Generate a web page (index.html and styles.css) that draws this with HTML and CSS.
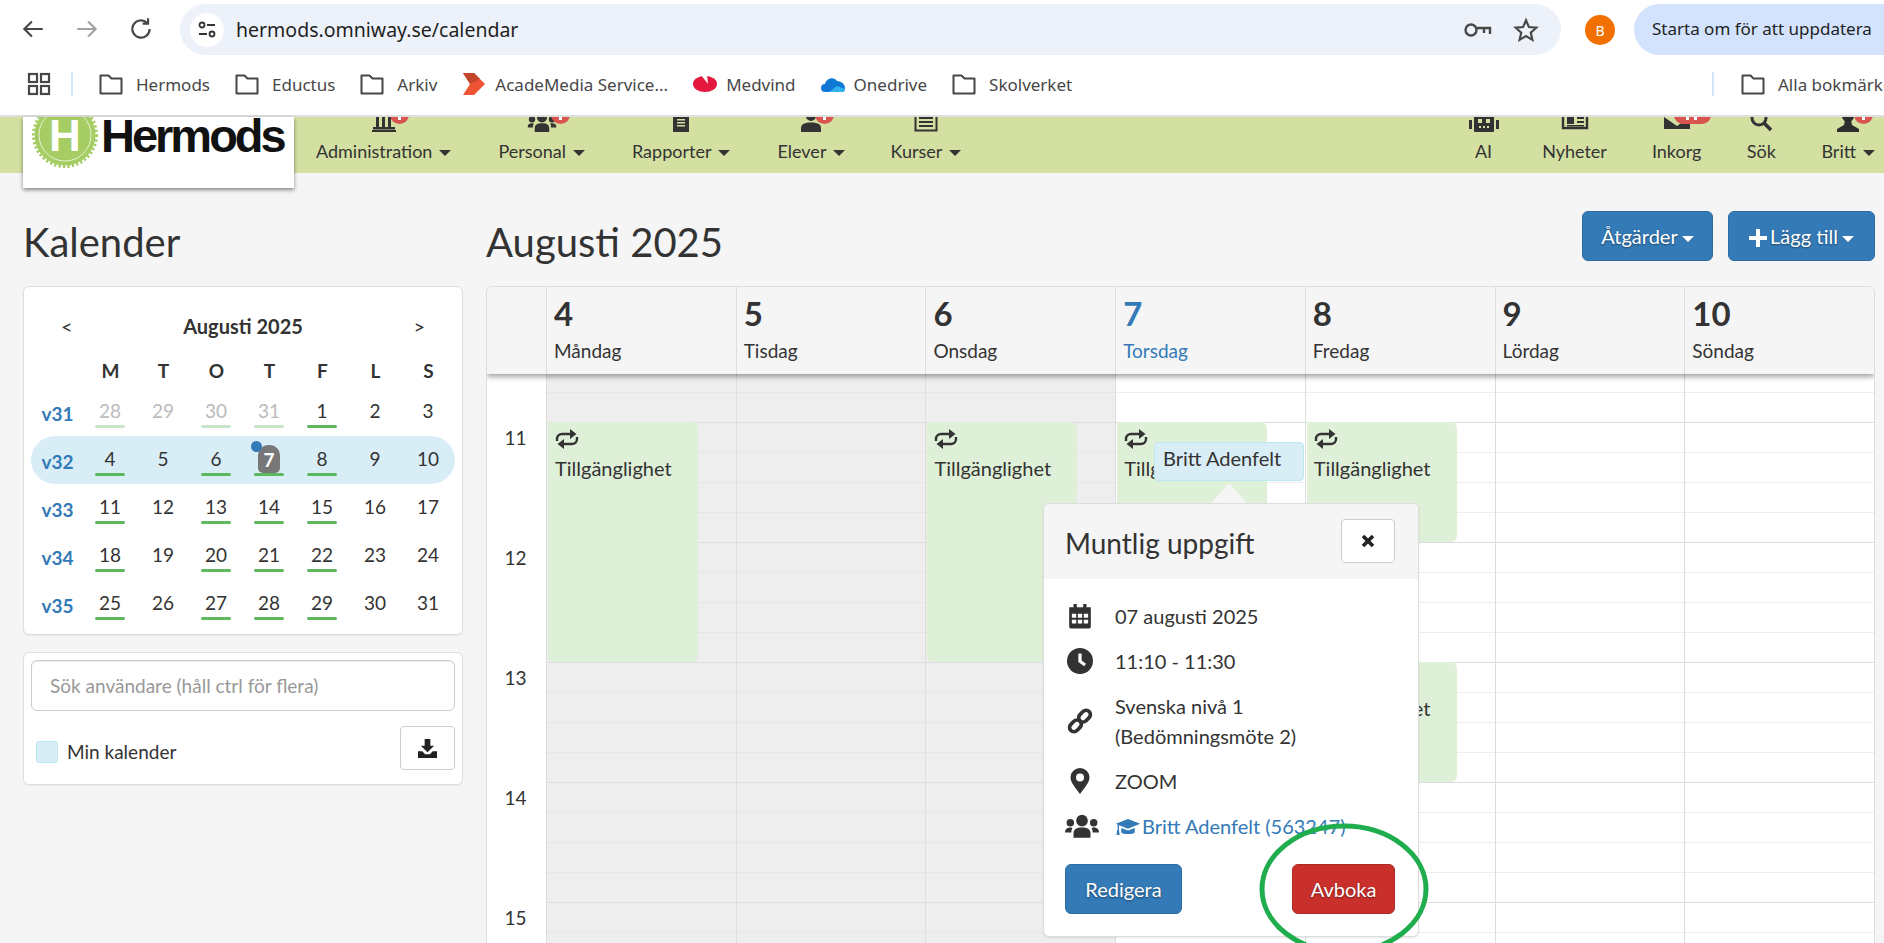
FILE: index.html
```html
<!DOCTYPE html>
<html lang="en">
<head>
    <meta charset="UTF-8">
    <meta name="viewport" content="width=device-width, initial-scale=1.0">
    <title>Kalender</title>
    <link rel="stylesheet" href="styles.css">
</head>
<body>
    <svg class="sprite" xmlns="http://www.w3.org/2000/svg">
        <symbol id="folder" viewBox="0 0 24 24"><path d="M1.500 3.500h8l3 3h10v15h-21z" fill="none" stroke="currentColor" stroke-width="2" stroke-linejoin="round"/></symbol>
        <symbol id="retweet" viewBox="0 0 24 20"><path d="M2 12v-2a5 5 0 0 1 5-5h9M22 8v2a5 5 0 0 1-5 5H8" fill="none" stroke="currentColor" stroke-width="2.400"/><path d="M15 0l6.500 5-6.500 5zM9 10l-6.500 5 6.500 5z" fill="currentColor"/></symbol>
        <symbol id="calendar" viewBox="0 0 24 24"><path d="M6 1h3v3H15V1h3v3h4v18a1.500 1.500 0 0 1-1.500 1.500h-17A1.500 1.500 0 0 1 2 22V4h4z" fill="currentColor"/><path d="M4.500 10h4v3.500h-4zM10 10h4v3.500h-4zM15.500 10h4v3.500h-4zM4.500 15.500h4V19h-4zM10 15.500h4V19h-4zM15.500 15.500h4V19h-4z" fill="#fff"/></symbol>
        <symbol id="clock" viewBox="0 0 24 24"><circle cx="12" cy="12" r="12" fill="currentColor"/><path d="M10.500 5h3v6.500l4 3-1.700 2.400-5.300-4z" fill="#fff"/></symbol>
        <symbol id="link" viewBox="0 0 24 24"><g fill="none" stroke="currentColor" stroke-width="3.400"><rect x="1.800" y="12.500" width="12" height="8" rx="4" transform="rotate(-45 7.800 16.500)"/><rect x="10.200" y="3.500" width="12" height="8" rx="4" transform="rotate(-45 16.200 7.500)"/></g></symbol>
        <symbol id="pin" viewBox="0 0 20 26"><path d="M10 0a9.500 9.500 0 0 1 9.500 9.500c0 5-5.500 11-9.500 16.500C6 20.500.5 14.500.5 9.500A9.500 9.500 0 0 1 10 0z" fill="currentColor"/><circle cx="10" cy="9.500" r="4" fill="#fff"/></symbol>
        <symbol id="users" viewBox="0 0 32 22"><g fill="currentColor"><circle cx="16" cy="6" r="5.500"/><circle cx="5" cy="8" r="3.500"/><circle cx="27" cy="8" r="3.500"/><path d="M8 22v-4c0-4 3-5.500 8-5.500s8 1.500 8 5.500v4zM0 17c0-3 2-4.500 5-4.500 1 0 1.500.2 2 .5-1 1.500-1 3-1 4H0zM32 17c0-3-2-4.500-5-4.500-1 0-1.500.2-2 .5 1 1.500 1 3 1 4h6z"/></g></symbol>
        <symbol id="cap" viewBox="0 0 28 20"><g fill="currentColor"><path d="M14 1L27.500 6.500 14 12 4 8v5L2.500 13V7.300L.5 6.500z"/><path d="M6.500 11v5c2 2.500 13 2.500 15 0v-5L14 14z"/><path d="M2 13h2l.7 6H1.300z"/></g></symbol>
        <symbol id="download" viewBox="0 0 20 20"><path d="M7 0h6v7h4l-7 7-7-7h4zM0 13h4.500l3 3h5l3-3H20v7H0z" fill="currentColor"/></symbol>
        <symbol id="times" viewBox="0 0 14 14"><path d="M2 2l10 10M12 2L2 12" stroke="currentColor" stroke-width="3.600"/></symbol>
    </svg>

    <div class="browser">
        <div class="toolbar">
            <svg class="tool-icon" viewBox="0 0 24 24"><path d="M21 12H4M11 5l-7 7 7 7" fill="none" stroke="#474747" stroke-width="2"/></svg>
            <svg class="tool-icon" viewBox="0 0 24 24"><path d="M3 12h17M13 5l7 7-7 7" fill="none" stroke="#a3a3a3" stroke-width="2"/></svg>
            <svg class="tool-icon" viewBox="0 0 24 24"><path d="M20 12a8 8 0 1 1-2.500-5.800M18.500 2v5h-5" fill="none" stroke="#474747" stroke-width="2"/></svg>
            <div class="addressbar">
                <span class="tune">
                    <svg viewBox="0 0 20 20" width="20" height="20"><g fill="none" stroke="#333" stroke-width="1.800"><circle cx="5" cy="5" r="2.500"/><path d="M10 5h8M2 14h8"/><circle cx="15" cy="14" r="2.500"/></g></svg>
                </span>
                <span class="url">hermods.omniway.se/calendar</span>
                <svg class="addr-icon" viewBox="0 0 30 24"><g fill="none" stroke="#474747" stroke-width="2.400"><circle cx="8" cy="12" r="5.500"/><path d="M13.500 10H27v6M21 10v5"/></g></svg>
                <svg class="addr-icon" viewBox="0 0 24 24"><path d="M12 3l2.700 6.300 6.800.6-5.100 4.500 1.500 6.700-5.900-3.500-5.900 3.500 1.500-6.700L2.500 9.900l6.800-.6z" fill="none" stroke="#474747" stroke-width="2"/></svg>
            </div>
            <span class="avatar">B</span>
            <span class="update">Starta om för att uppdatera</span>
        </div>
        <div class="bookmarks">
            <svg class="apps" viewBox="0 0 24 24"><g fill="none" stroke="#474747" stroke-width="2.200"><rect x="2" y="2" width="8" height="8"/><rect x="14" y="2" width="8" height="8"/><rect x="2" y="14" width="8" height="8"/><rect x="14" y="14" width="8" height="8"/></g></svg>
            <span class="bm-sep"></span>
            <span class="bm"><svg class="bm-icon"><use href="#folder"/></svg>Hermods</span>
            <span class="bm"><svg class="bm-icon"><use href="#folder"/></svg>Eductus</span>
            <span class="bm"><svg class="bm-icon"><use href="#folder"/></svg>Arkiv</span>
            <span class="bm bm-color"><svg class="bm-icon" viewBox="0 0 24 24"><path d="M1 1h11l11 11-11 11H1l7-11z" fill="#ee5434"/><path d="M1 1h11l6 6-10 5z" fill="#c4472d"/></svg>AcadeMedia Service...</span>
            <span class="bm bm-color"><svg class="bm-icon" viewBox="0 0 24 24"><ellipse cx="12" cy="12" rx="12" ry="8" fill="#e4173f"/><path d="M8 3l7 9-1-9z" fill="#fff"/></svg>Medvind</span>
            <span class="bm bm-color"><svg class="bm-icon" viewBox="0 0 24 24"><path d="M4 20a4 4 0 0 1 0-8c1-6 9-8 12-3 4 0 8 3 8 7 0 2-1 4-3 4z" fill="#0f78d4"/><path d="M8 20l8-6 8 3c0 2-1 3-3 3z" fill="#33b2ee"/></svg>Onedrive</span>
            <span class="bm"><svg class="bm-icon"><use href="#folder"/></svg>Skolverket</span>
            <span class="bm-sep bm-sep-right"></span>
            <span class="bm bm-all"><svg class="bm-icon"><use href="#folder"/></svg>Alla bokmärken</span>
        </div>
    </div>

    <div class="topnav">
        <div class="logo">
            <svg class="seal" viewBox="0 0 66 66">
                <circle cx="33" cy="33" r="30.500" fill="#a5cd64"/>
                <circle cx="33" cy="33" r="31" fill="none" stroke="#a5cd64" stroke-width="4" stroke-dasharray="2.200 2.200"/>
                <circle cx="33" cy="33" r="26" fill="none" stroke="#e6f1d2" stroke-width="1"/>
                <text x="33" y="49" text-anchor="middle" class="seal-h">H</text>
            </svg>
            <span class="logo-text">Hermods</span>
        </div>
        <div class="nav-left">
            <div class="nav-item nav-admin">
                <span class="nav-icon"><svg width="26" height="20" viewBox="0 0 26 20"><path d="M5 0h3v15H5zM11 0h3v15h-3zM17 0h3v15h-3zM2 15h22v2.500H2zM1 18h24v2H1z" fill="#333"/></svg><i class="badge"></i></span>
                <span class="nav-label">Administration<i class="caret"></i></span>
            </div>
            <div class="nav-item nav-personal">
                <span class="nav-icon"><svg width="32" height="20" viewBox="0 0 32 22"><use href="#users"/></svg><i class="badge"></i></span>
                <span class="nav-label">Personal<i class="caret"></i></span>
            </div>
            <div class="nav-item nav-rapporter">
                <span class="nav-icon"><svg width="18" height="20" viewBox="0 0 18 20"><path d="M1 0h16v20H1z" fill="#333"/><path d="M5 7h8v1.500H5zM5 10h8v1.500H5zM5 13h8v1.500H5z" fill="#d3e0a2"/></svg></span>
                <span class="nav-label">Rapporter<i class="caret"></i></span>
            </div>
            <div class="nav-item nav-elever">
                <span class="nav-icon"><svg width="22" height="20" viewBox="0 0 22 20"><circle cx="11" cy="4" r="5" fill="#333"/><path d="M1 20v-4c0-4 4-5.500 10-5.500s10 1.500 10 5.500v4z" fill="#333"/></svg><i class="badge"></i></span>
                <span class="nav-label">Elever<i class="caret"></i></span>
            </div>
            <div class="nav-item nav-kurser">
                <span class="nav-icon"><svg width="24" height="20" viewBox="0 0 24 20"><path d="M1.500 1h21v17.500h-21z" fill="none" stroke="#333" stroke-width="2"/><path d="M5 5h14v2H5zM5 9h14v2H5zM5 13h14v2H5z" fill="#333"/></svg></span>
                <span class="nav-label">Kurser<i class="caret"></i></span>
            </div>
        </div>
        <div class="nav-right">
            <div class="nav-item nav-ai">
                <span class="nav-icon"><svg width="30" height="20" viewBox="0 0 30 20"><path d="M7 0h16a2 2 0 0 1 2 2v17a1 1 0 0 1-1 1H6a1 1 0 0 1-1-1V2a2 2 0 0 1 2-2zM0 8h3v9H0zM27 8h3v9h-3z" fill="#333"/><path d="M9 7h4v4H9zM17 7h4v4h-4zM10 14h2v2h-2zM14 14h2v2h-2zM18 14h2v2h-2z" fill="#d3e0a2"/></svg></span>
                <span class="nav-label">AI</span>
            </div>
            <div class="nav-item nav-nyheter">
                <span class="nav-icon"><svg width="28" height="20" viewBox="0 0 28 20"><path d="M2 -2h24v18H2z" fill="none" stroke="#333" stroke-width="2.400"/><path d="M6 5h7v7H6zM16 5h7v2h-7zM16 9h7v2h-7zM6 13h17v1.500H6z" fill="#333"/></svg></span>
                <span class="nav-label">Nyheter</span>
            </div>
            <div class="nav-item nav-inkorg">
                <span class="nav-icon"><svg width="28" height="20" viewBox="0 0 28 20"><path d="M1 5l13 9L27 5v12H1z" fill="#333"/><path d="M1 1h8L1 5z" fill="#333"/></svg><i class="badge badge-wide"></i></span>
                <span class="nav-label">Inkorg</span>
            </div>
            <div class="nav-item nav-sok">
                <span class="nav-icon"><svg width="24" height="20" viewBox="0 0 24 20"><circle cx="10" cy="6" r="7" fill="none" stroke="#333" stroke-width="3"/><path d="M15 11l7 7" stroke="#333" stroke-width="3.500"/></svg></span>
                <span class="nav-label">Sök</span>
            </div>
            <div class="nav-item nav-britt">
                <span class="nav-icon"><svg width="26" height="20" viewBox="0 0 26 20"><circle cx="13" cy="4" r="6" fill="#2d2d2d"/><path d="M10 8h6l1 5 7 4v3H2v-3l7-4z" fill="#2d2d2d"/></svg><i class="badge"></i></span>
                <span class="nav-label">Britt<i class="caret"></i></span>
            </div>
        </div>
    </div>

    <div class="content">
        <div class="side">
            <h1 class="page-title">Kalender</h1>
            <div class="panel minical">
                <div class="mc-head">
                    <span class="mc-arrow">&lt;</span>
                    <strong>Augusti 2025</strong>
                    <span class="mc-arrow">&gt;</span>
                </div>
                <div class="mc-row mc-days">
                    <span></span><b>M</b><b>T</b><b>O</b><b>T</b><b>F</b><b>L</b><b>S</b>
                </div>
                <div class="mc-row">
                    <span class="wk">v31</span>
                    <span class="d off mark">28</span><span class="d off">29</span><span class="d off mark">30</span><span class="d off mark">31</span><span class="d has">1</span><span class="d">2</span><span class="d">3</span>
                </div>
                <div class="mc-row current">
                    <span class="wk">v32</span>
                    <span class="d has">4</span><span class="d">5</span><span class="d has">6</span><span class="d has today"><i class="dot"></i><em>7</em></span><span class="d has">8</span><span class="d">9</span><span class="d">10</span>
                </div>
                <div class="mc-row">
                    <span class="wk">v33</span>
                    <span class="d has">11</span><span class="d">12</span><span class="d has">13</span><span class="d has">14</span><span class="d has">15</span><span class="d">16</span><span class="d">17</span>
                </div>
                <div class="mc-row">
                    <span class="wk">v34</span>
                    <span class="d has">18</span><span class="d">19</span><span class="d has">20</span><span class="d has">21</span><span class="d has">22</span><span class="d">23</span><span class="d">24</span>
                </div>
                <div class="mc-row">
                    <span class="wk">v35</span>
                    <span class="d has">25</span><span class="d">26</span><span class="d has">27</span><span class="d has">28</span><span class="d has">29</span><span class="d">30</span><span class="d">31</span>
                </div>
            </div>
            <div class="panel userbox">
                <input class="usersearch" type="text" placeholder="Sök användare (håll ctrl för flera)">
                <div class="userbox-row">
                    <span class="check"></span>
                    <span class="check-label">Min kalender</span>
                    <button class="btn-plain"><svg width="19" height="19"><use href="#download"/></svg></button>
                </div>
            </div>
        </div>

        <div class="main">
            <div class="main-head">
                <h1 class="page-title">Augusti 2025</h1>
                <div class="actions">
                    <button class="btn btn-blue btn-do">Åtgärder<i class="caret"></i></button>
                    <button class="btn btn-blue btn-add"><span class="plus"></span>Lägg till<i class="caret"></i></button>
                </div>
            </div>

            <div class="week">
                <div class="week-head">
                    <div class="corner"></div>
                    <div class="dayhead"><b>4</b><span>Måndag</span></div>
                    <div class="dayhead"><b>5</b><span>Tisdag</span></div>
                    <div class="dayhead"><b>6</b><span>Onsdag</span></div>
                    <div class="dayhead today-head"><b>7</b><span>Torsdag</span></div>
                    <div class="dayhead"><b>8</b><span>Fredag</span></div>
                    <div class="dayhead"><b>9</b><span>Lördag</span></div>
                    <div class="dayhead"><b>10</b><span>Söndag</span></div>
                </div>
                <div class="week-body">
                    <div class="hours">
                        <div class="hour">11</div>
                        <div class="hour">12</div>
                        <div class="hour">13</div>
                        <div class="hour">14</div>
                        <div class="hour">15</div>
                    </div>
                    <div class="daycol closed">
                        <div class="event ev-long"><svg class="rt"><use href="#retweet"/></svg>Tillgänglighet</div>
                    </div>
                    <div class="daycol closed"></div>
                    <div class="daycol closed">
                        <div class="event ev-long"><svg class="rt"><use href="#retweet"/></svg>Tillgänglighet</div>
                    </div>
                    <div class="daycol">
                        <div class="event ev-short"><svg class="rt"><use href="#retweet"/></svg>Tillgänglighet</div>
                    </div>
                    <div class="daycol">
                        <div class="event ev-short"><svg class="rt"><use href="#retweet"/></svg>Tillgänglighet</div>
                        <div class="event ev-short ev-later"><svg class="rt"><use href="#retweet"/></svg>Tillgänglighet</div>
                    </div>
                    <div class="daycol"></div>
                    <div class="daycol"></div>
                </div>
            </div>
        </div>
    </div>

    <div class="tip">Britt Adenfelt</div>
    <div class="pop-arrow"></div>
    <div class="popover">
        <div class="pop-head">
            <span class="pop-title">Muntlig uppgift</span>
            <button class="btn-plain btn-close"><svg width="14" height="14"><use href="#times"/></svg></button>
        </div>
        <div class="pop-body">
            <div class="pop-row"><svg class="pop-icon"><use href="#calendar"/></svg><span>07 augusti 2025</span></div>
            <div class="pop-row"><svg class="pop-icon"><use href="#clock"/></svg><span>11:10 - 11:30</span></div>
            <div class="pop-row pop-row-tall"><svg class="pop-icon"><use href="#link"/></svg><span>Svenska nivå 1<br>(Bedömningsmöte 2)</span></div>
            <div class="pop-row"><svg class="pop-icon"><use href="#pin"/></svg><span>ZOOM</span></div>
            <div class="pop-row"><svg class="pop-icon pop-icon-wide"><use href="#users"/></svg><a class="pop-link"><svg class="cap"><use href="#cap"/></svg>Britt Adenfelt (563247)</a></div>
            <div class="pop-actions">
                <button class="btn btn-blue btn-edit">Redigera</button>
                <button class="btn btn-red">Avboka</button>
            </div>
        </div>
    </div>
    <svg class="ring" width="172" height="136" viewBox="0 0 172 136"><ellipse cx="86" cy="67" rx="82" ry="63" fill="none" stroke="#1fad4d" stroke-width="5"/></svg>
</body>
</html>
```

FILE: styles.css
```css
* {
    box-sizing: border-box;
}
html, body {
    height: 100%;
}
body {
    margin: 0;
    overflow: hidden;
    background-color: #f5f5f5;
    color: #333;
    font-family: Lato, "Open Sans", sans-serif;
    font-size: 19px;
    position: relative;
}
.sprite {
    display: none;
}
i, em {
    font-style: normal;
}

/* browser chrome */
.browser {
    height: 117px;
    background-color: #fff;
    border-bottom: 2px solid #dedede;
    font-family: "Noto Sans", sans-serif;
    color: #333;
}
.toolbar {
    height: 56px;
    display: flex;
    align-items: flex-start;
    padding: 4px 0 0 20px;
}
.tool-icon {
    width: 26px;
    height: 26px;
    margin: 12px 28px 0 0;
    flex: none;
}
.tool-icon:nth-child(3) {
    margin-right: 26px;
}
.addressbar {
    width: 1381px;
    height: 51px;
    flex: none;
    background-color: #edf2fa;
    border-radius: 26px;
    display: flex;
    align-items: center;
    padding: 0 20px 0 10px;
}
.tune {
    width: 34px;
    height: 34px;
    border-radius: 50%;
    background-color: #fff;
    display: flex;
    align-items: center;
    justify-content: center;
    margin-right: 12px;
}
.url {
    flex: 1;
    font-size: 19.5px;
    color: #1f1f1f;
}
.addr-icon {
    width: 30px;
    height: 26px;
    margin-left: 18px;
}
.avatar {
    width: 30px;
    height: 30px;
    border-radius: 50%;
    background-color: #f27000;
    color: #fff;
    font-size: 14px;
    display: flex;
    align-items: center;
    justify-content: center;
    margin: 11px 19px 0 24px;
    flex: none;
}
.update {
    height: 51px;
    flex: 1;
    background-color: #d3e3fd;
    border-radius: 26px 0 0 26px;
    padding: 0 0 0 18px;
    font-size: 17px;
    line-height: 49px;
    white-space: nowrap;
    overflow: hidden;
    color: #1f1f1f;
}
.bookmarks {
    height: 56px;
    display: flex;
    align-items: center;
    padding-left: 27px;
    font-size: 17px;
    white-space: nowrap;
    overflow: hidden;
    color: #474747;
}
.apps {
    width: 24px;
    height: 24px;
    flex: none;
}
.bm-sep {
    width: 2px;
    height: 24px;
    background-color: #d3e3fd;
    margin: 0 26px 0 20px;
    flex: none;
}
.bm-sep-right {
    margin-left: auto;
    margin-right: 27px;
}
.bm {
    display: flex;
    align-items: center;
    gap: 13px;
    margin-right: 25px;
    flex: none;
}
.bm-color {
    gap: 9px;
}
.bm-all {
    width: 143px;
    margin-right: 0;
    overflow: hidden;
}
.bm-icon {
    width: 24px;
    height: 24px;
    flex: none;
}

/* hermods top bar */
.topnav {
    height: 56px;
    background-color: #d3e0a2;
    position: relative;
    display: flex;
    justify-content: space-between;
    padding-left: 316px;
    font-size: 18px;
}
.logo {
    position: absolute;
    left: 23px;
    top: 0;
    width: 271px;
    height: 71px;
    background-color: #fff;
    box-shadow: 0 2px 4px rgba(0, 0, 0, .45);
    overflow: hidden;
    display: flex;
    align-items: flex-start;
}
.seal {
    width: 66px;
    height: 66px;
    margin: -15px 0 0 9px;
    flex: none;
}
.seal-h {
    font: bold 44px "Liberation Sans", sans-serif;
    fill: #fff;
}
.logo-text {
    font: bold 47px/47px "Liberation Sans", sans-serif;
    letter-spacing: -3px;
    color: #111;
    margin: -5px 0 0 3px;
}
.nav-left, .nav-right {
    display: flex;
}
.nav-left {
    gap: 47px;
}
.nav-right {
    gap: 45px;
    padding-right: 9px;
}
.nav-item {
    display: flex;
    flex-direction: column;
    align-items: center;
}
.nav-kurser {
    margin-left: -2px;
}
.nav-icon {
    height: 15px;
    position: relative;
    overflow: hidden;
    display: block;
    padding: 0 12px;
}
.nav-icon svg {
    display: block;
    margin-top: -5px;
}
.nav-ai {
    margin-right: 5px;
}
.nav-ai .nav-icon {
    margin: 0 -19px;
}
.nav-sok .nav-icon {
    margin: 0 -9px;
}
.nav-inkorg .nav-icon {
    padding: 0 36px;
    margin: 0 -28px;
}
.badge {
    position: absolute;
    right: 0;
    top: -12px;
    width: 19px;
    height: 19px;
    border-radius: 50%;
    background-color: #d9534f;
}
.badge::after {
    content: "";
    position: absolute;
    left: 8px;
    bottom: 4px;
    width: 3px;
    height: 3px;
    background-color: #fff;
}
.badge-wide {
    width: 37px;
    border-radius: 9px;
    right: 16px;
}
.badge-wide::after {
    left: 12px;
    box-shadow: 8px 0 #fff;
}
.nav-label {
    margin-top: 7px;
    line-height: 24px;
    white-space: nowrap;
}
.caret {
    display: inline-block;
    border-top: 6px solid #333;
    border-left: 6px solid transparent;
    border-right: 6px solid transparent;
    margin-left: 7px;
    vertical-align: 2px;
}

/* page */
.content {
    display: flex;
    gap: 23px;
    padding: 0 9px 0 23px;
}
.side {
    width: 440px;
    flex: none;
}
.main {
    flex: 1;
}
.page-title {
    margin: 0;
    height: 113px;
    padding-top: 44px;
    font-size: 40px;
    font-weight: 400;
    line-height: 50px;
    color: #333;
}
.panel {
    background-color: #fff;
    border: 1px solid #ddd;
    border-radius: 6px;
    box-shadow: 0 1px 1px rgba(0, 0, 0, .05);
}

/* mini calendar */
.minical {
    height: 349px;
    padding: 25px 7px 0;
}
.mc-head {
    display: flex;
    justify-content: space-between;
    align-items: center;
    height: 28px;
    padding: 0 30px;
    font-size: 20px;
    margin-bottom: 17px;
}
.mc-row {
    display: grid;
    grid-template-columns: 53px repeat(7, 53px);
    height: 48px;
    align-items: center;
    justify-items: center;
    border-radius: 24px;
    width: 424px;
}
.mc-days {
    height: 24px;
    margin-bottom: 7px;
    font-size: 19px;
    position: relative;
    top: 1px;
}
.current {
    background-color: #d9edf7;
}
.wk {
    color: #337ab7;
    font-weight: 700;
    margin-top: 2px;
}
.d {
    position: relative;
    width: 30px;
    height: 36px;
    text-align: center;
    line-height: 34px;
    white-space: nowrap;
    margin-left: -1px;
    display: flex;
    justify-content: center;
}
.has::after, .mark::after {
    content: "";
    position: absolute;
    left: 0;
    right: 0;
    bottom: 2px;
    height: 3px;
    border-radius: 2px;
    background-color: #5cb85c;
}
.off {
    color: #bbb;
}
.mark::after {
    background-color: #c9e5c9;
}
.today em {
    width: 22px;
    height: 28px;
    border-radius: 10px 10px 5px 5px;
    background-color: #777;
    color: #fff;
    font-weight: 700;
    line-height: 30px;
    margin-top: 3px;
}
.dot {
    position: absolute;
    left: -3px;
    top: -1px;
    width: 11px;
    height: 11px;
    border-radius: 50%;
    background-color: #337ab7;
}

/* user search box */
.userbox {
    height: 133px;
    margin-top: 17px;
    padding: 7px;
}
.usersearch {
    display: block;
    width: 100%;
    height: 51px;
    border: 1px solid #ccc;
    border-radius: 6px;
    padding: 0 18px;
    font: inherit;
    box-shadow: inset 0 1px 1px rgba(0, 0, 0, .07);
}
.usersearch::placeholder {
    color: #999;
}
.userbox-row {
    display: flex;
    align-items: center;
    margin-top: 15px;
    padding-left: 5px;
}
.check {
    width: 22px;
    height: 22px;
    background-color: #d9edf7;
    border: 1px solid #bce8f1;
    border-radius: 3px;
    margin: 7px 9px 0 0;
}
.check-label {
    flex: 1;
    margin-top: 7px;
}
.btn-plain {
    width: 55px;
    height: 44px;
    border: 1px solid #ccc;
    border-radius: 4px;
    background-color: #fff;
    color: #222;
    display: flex;
    align-items: center;
    justify-content: center;
    padding: 0;
}

/* week header and buttons */
.main-head {
    display: flex;
    justify-content: space-between;
}
.actions {
    display: flex;
    gap: 15px;
    padding-top: 38px;
}
.btn {
    height: 50px;
    border: 1px solid #2e6da4;
    border-radius: 6px;
    color: #fff;
    font: inherit;
    font-size: 20px;
    padding: 0;
    text-shadow: 0 1px 2px rgba(0, 0, 0, .45);
    white-space: nowrap;
}
.btn-blue {
    background-color: #337ab7;
}
.btn-do {
    width: 131px;
}
.btn-add {
    width: 147px;
}
.btn-red {
    background-color: #c9302c;
    border-color: #ac2925;
    width: 103px;
}
.btn .caret {
    border-top-color: #fff;
    border-width: 6px 6px 0;
    margin-left: 4px;
}
.plus {
    display: inline-block;
    width: 18px;
    height: 18px;
    margin-right: 3px;
    vertical-align: -3px;
    background: linear-gradient(#fff, #fff) center / 100% 4px no-repeat, linear-gradient(#fff, #fff) center / 4px 100% no-repeat;
}

/* week view */
.week {
    border: 1px solid #ddd;
    border-bottom: 0;
    border-radius: 6px 6px 0 0;
    background-color: #fff;
    height: 657px;
    overflow: hidden;
}
.week-head {
    display: grid;
    grid-template-columns: 59px repeat(7, 1fr);
    height: 87px;
    background-color: #f5f5f5;
    box-shadow: 0 3px 5px rgba(0, 0, 0, .35);
    position: relative;
    z-index: 1;
}
.dayhead {
    border-left: 1px solid #ddd;
    padding: 4px 0 0 7px;
    display: flex;
    flex-direction: column;
}
.dayhead b {
    font-size: 33px;
    line-height: 44px;
}
.dayhead span {
    font-size: 19px;
    line-height: 26px;
    margin-top: 3px;
}
.today-head {
    color: #337ab7;
}
.week-body {
    display: grid;
    grid-template-columns: 59px repeat(7, 1fr);
    height: 570px;
}
.hours {
    padding-top: 48px;
    text-align: center;
}
.hour {
    height: 120px;
    padding: 3px 2px 0 0;
    line-height: 26px;
}
.daycol {
    position: relative;
    border-left: 1px solid #ddd;
    background-image: linear-gradient(#ddd 1px, transparent 1px), linear-gradient(#eee 1px, transparent 1px);
    background-size: 100% 120px, 100% 30px;
    background-position: 0 48px, 0 18px;
}
.closed {
    background-color: #eee;
    background-image: linear-gradient(#ddd 1px, transparent 1px), linear-gradient(#e6e6e6 1px, transparent 1px);
}
.event {
    position: absolute;
    left: 1px;
    top: 48px;
    width: 150px;
    padding: 7px 7px;
    background-color: #dff0d8;
    border-radius: 0 6px 6px 6px;
    font-size: 20px;
    line-height: 26px;
}
.ev-long {
    height: 240px;
}
.ev-short {
    height: 120px;
}
.ev-later {
    top: 288px;
}
.rt {
    display: block;
    width: 24px;
    height: 20px;
    margin-bottom: 6px;
}

/* booking popover */
.tip {
    position: absolute;
    left: 1154px;
    top: 442px;
    width: 150px;
    height: 39px;
    padding-left: 8px;
    background-color: #d9edf7;
    border: 1px solid #bce8f1;
    border-radius: 4px;
    font-size: 20px;
    line-height: 30px;
}
.pop-arrow {
    position: absolute;
    left: 1211px;
    top: 483px;
    border-left: 18px solid transparent;
    border-right: 18px solid transparent;
    border-bottom: 20px solid #f5f5f5;
}
.popover {
    position: absolute;
    left: 1043px;
    top: 503px;
    width: 376px;
    height: 434px;
    background-color: #fff;
    border: 1px solid #ddd;
    border-radius: 6px;
    box-shadow: 0 1px 2px rgba(0, 0, 0, .1);
    font-size: 20px;
}
.pop-head {
    height: 75px;
    background-color: #f5f5f5;
    display: flex;
    justify-content: space-between;
    align-items: flex-start;
    padding: 15px 23px 0 21px;
    border-radius: 6px 6px 0 0;
}
.pop-title {
    font-size: 28px;
    line-height: 48px;
}
.btn-close {
    width: 54px;
}
.pop-body {
    padding: 14px 23px 0 21px;
}
.pop-row {
    display: flex;
    align-items: center;
    min-height: 45px;
    line-height: 30px;
}
.pop-row-tall {
    min-height: 75px;
}
.pop-icon {
    width: 26px;
    height: 26px;
    margin: 0 22px 0 2px;
    flex: none;
    color: #333;
}
.pop-icon-wide {
    width: 34px;
    margin: 0 16px 0 0;
}
.pop-link {
    color: #337ab7;
    white-space: nowrap;
}
.cap {
    width: 26px;
    height: 18px;
    vertical-align: -2px;
    margin-right: 1px;
}
.pop-actions {
    display: flex;
    justify-content: space-between;
    margin-top: 16px;
}
.btn-edit {
    width: 117px;
}
.ring {
    position: absolute;
    left: 1258px;
    top: 822px;
}
```
